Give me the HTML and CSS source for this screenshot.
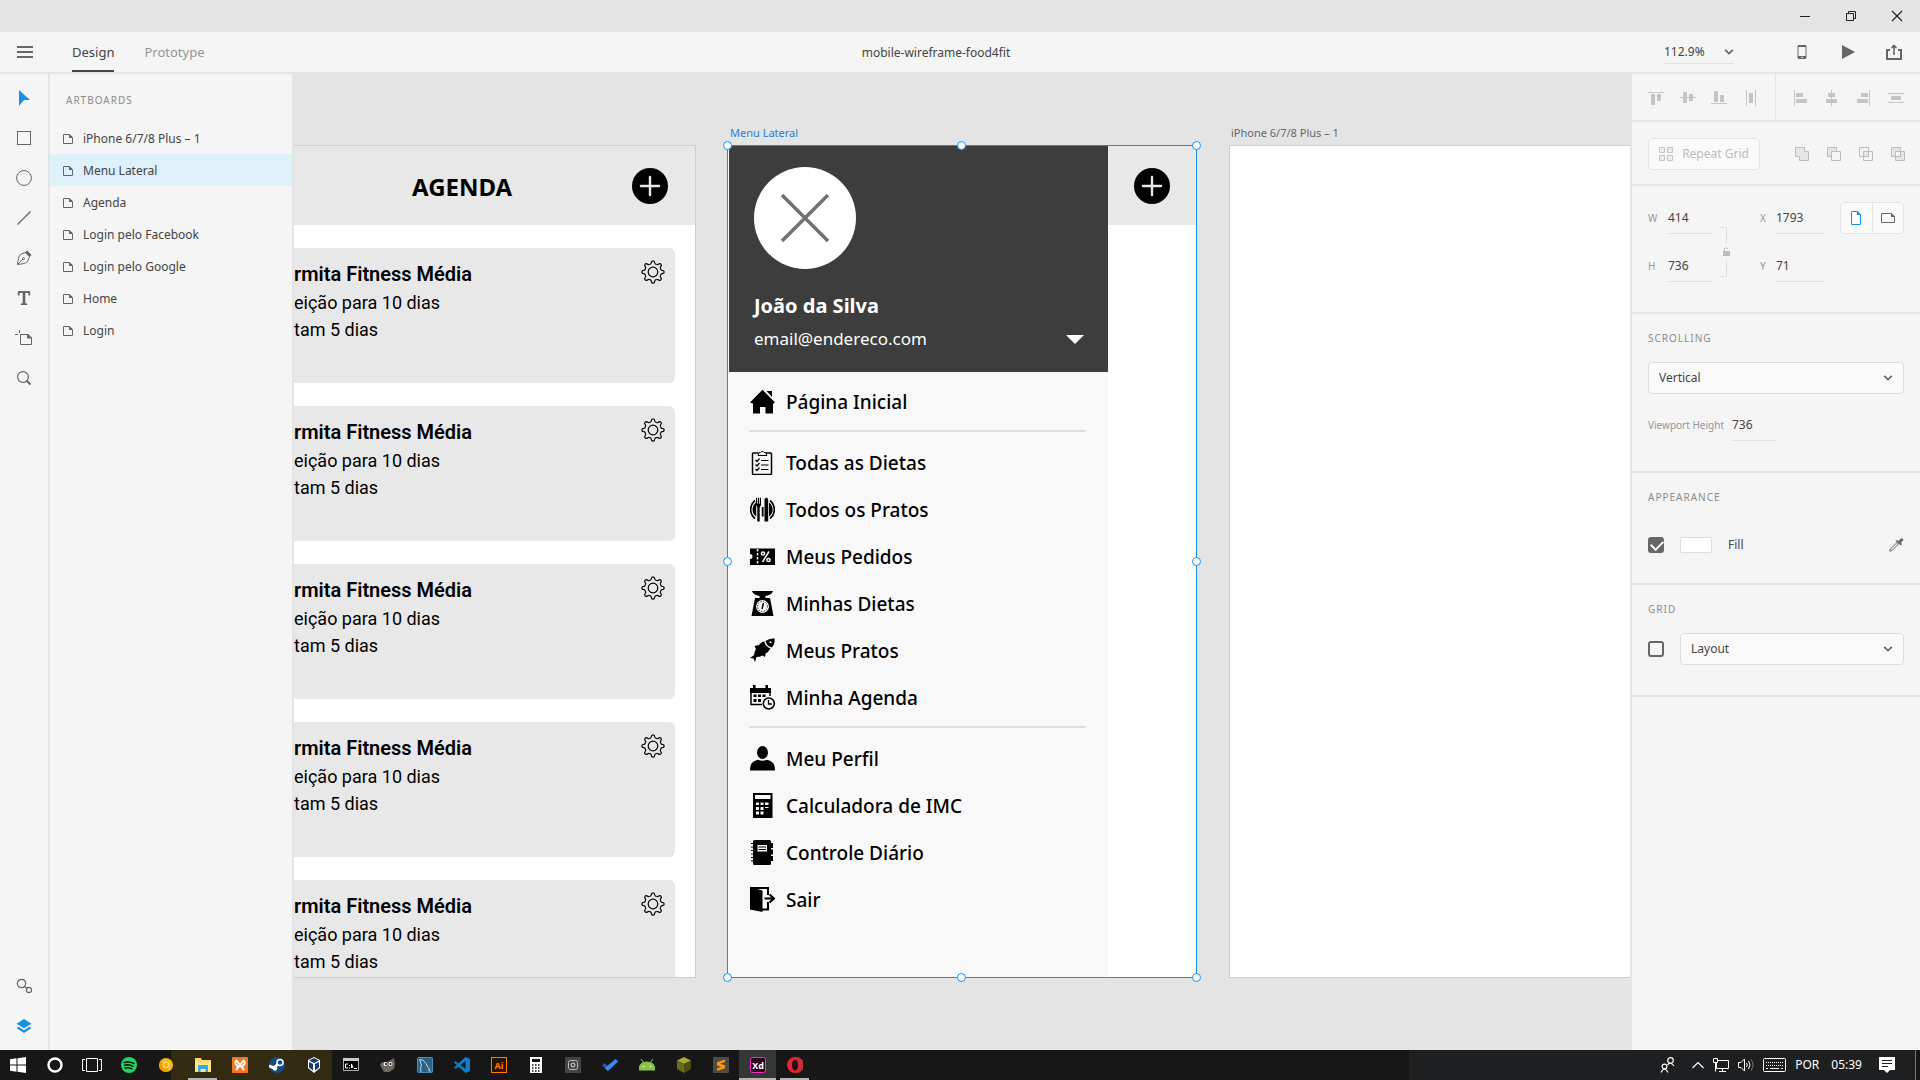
FILE: index.html
```html
<!DOCTYPE html>
<html lang="en">
<head>
<meta charset="utf-8">
<title>mobile-wireframe-food4fit</title>
<link rel="stylesheet" href="styles.css">
</head>
<body>
<svg class="sprite" aria-hidden="true">
  <symbol id="page" viewBox="0 0 10 10"><path d="M1 .5h5.500l3 3v6h-9v-9z" fill="none" stroke="#666"/><path d="M6 0l4 4H6z" fill="#666"/></symbol>
  <symbol id="chevron" viewBox="0 0 10 8"><path d="M1.200 1.800 5 5.500l3.800-3.700" fill="none" stroke="#666" stroke-width="1.700"/></symbol>
  <symbol id="add" viewBox="0 0 36 36"><circle cx="18" cy="18" r="18"/><path d="M18 9v18M9 18h18" stroke="#e8e8e8" stroke-width="2.400" stroke-linecap="round"/></symbol>
  <symbol id="gear" viewBox="0 0 24 24">
    <g fill="none" stroke="#000" stroke-width="1.200">
      <circle cx="12" cy="12" r="4.800"/>
      <path id="t" d="M8.820 4.330Q10.200 4 10.300 2.800 10.400.8 12 .8q1.600 0 1.700 2Q13.800 4 15.180 4.330"/>
      <use href="#t" transform="rotate(45 12 12)"/><use href="#t" transform="rotate(90 12 12)"/><use href="#t" transform="rotate(135 12 12)"/><use href="#t" transform="rotate(180 12 12)"/><use href="#t" transform="rotate(225 12 12)"/><use href="#t" transform="rotate(270 12 12)"/><use href="#t" transform="rotate(315 12 12)"/>
    </g>
  </symbol>
</svg>

<div class="app">
  <header class="titlebar">
    <button class="win" aria-label="Minimize"><svg width="12" height="12"><path d="M1 6.500h10" stroke="#222"/></svg></button>
    <button class="win" aria-label="Restore"><svg width="12" height="12" fill="none" stroke="#222"><path d="M1.500 3.500h7v7h-7zM3.500 3V1.500h7v7H9"/></svg></button>
    <button class="win" aria-label="Close"><svg width="12" height="12"><path d="M1 1l10 10M11 1 1 11" stroke="#222" stroke-width="1.200"/></svg></button>
  </header>

  <div class="topbar">
    <div class="topbar-left">
      <button class="burger" aria-label="Menu"><svg width="16" height="12"><path d="M0 1h16M0 6h16M0 11h16" stroke="#666" stroke-width="2"/></svg></button>
      <nav class="modes"><a class="mode active" href="#design">Design</a><a class="mode" href="#prototype">Prototype</a></nav>
    </div>
    <h1 class="doc-title">mobile-wireframe-food4fit</h1>
    <div class="topbar-right">
      <label class="zoom"><select aria-label="Zoom"><option>112.9%</option></select><svg width="10" height="8"><use href="#chevron"/></svg></label>
      <div class="actions">
        <button aria-label="Device preview"><svg width="16" height="16"><rect x="4" y="1.500" width="8" height="13" rx="1" fill="none" stroke="#666"/><path d="M4 1h8v2H4zM4 12h8v3H4z" fill="#666"/><circle cx="8" cy="13.500" r=".8" fill="#f5f5f5"/></svg></button>
        <button aria-label="Play"><svg width="16" height="16"><path d="M2 1l13 7-13 7z" fill="#666"/></svg></button>
        <button aria-label="Share"><svg width="16" height="16" fill="none" stroke="#666" stroke-width="2"><path d="M4 6H1v9h14V6h-3"/><path d="M8 11V2M5.500 4 8 1.500 10.500 4" stroke-width="1.600"/></svg></button>
      </div>
    </div>
  </div>

  <main class="workspace">
    <div class="tools" role="toolbar" aria-label="Tools">
      <button aria-label="Select"><svg width="16" height="16"><path d="M3 0l11 10H8l-5 6z" fill="#1592e6"/></svg></button>
      <button aria-label="Rectangle"><svg width="16" height="16"><rect x="1.500" y="1.500" width="13" height="13" fill="none" stroke="#666"/></svg></button>
      <button aria-label="Ellipse"><svg width="16" height="16"><circle cx="8" cy="8" r="7.400" fill="none" stroke="#666"/></svg></button>
      <button aria-label="Line"><svg width="16" height="16"><path d="M1.500 14.500l13-13" stroke="#666" stroke-width="1.200"/></svg></button>
      <button aria-label="Pen"><svg width="16" height="16" fill="none" stroke="#666"><path d="M1.500 14.500C2 10 2.500 6.500 4.500 4.500 6 3.500 8 3 9.500 2.500l4 4C13 8 12.500 10 11.500 11.500 9.500 13.500 6 14 1.500 14.500zM2 14l5-5"/><circle cx="7.500" cy="8.500" r="1"/><path d="M10 1.500l4.500 4.500" stroke-width="3"/></svg></button>
      <button aria-label="Text"><svg width="16" height="16" fill="none" stroke="#666"><path d="M2.800 5.500V2h10.400v3.500" stroke-width="1.800"/><path d="M8 2v12" stroke-width="2.600"/><path d="M4.800 14.200h6.400" stroke-width="1.600"/></svg></button>
      <button aria-label="Artboard"><svg width="18" height="16" fill="none" stroke="#666"><path d="M5.500 5v9.500h11V8l-3.500-3.500H5M4.500 0v3M0 4.500h3"/><path d="M12.500 4l4 4h-4z" fill="#666"/></svg></button>
      <button aria-label="Zoom"><svg width="16" height="16" fill="none" stroke="#666"><circle cx="7" cy="7" r="5.400" stroke-width="1.200"/><path d="M10.500 10.500l4 4" stroke-width="2"/></svg></button>
      <span class="grow"></span>
      <button aria-label="Assets"><svg width="16" height="16" fill="none" stroke="#666" stroke-width="1.200"><circle cx="5.500" cy="5.500" r="4.200"/><circle cx="13" cy="12" r="2.600"/><path d="M8.500 8.500l2.500 2"/></svg></button>
      <button aria-label="Layers"><svg width="16" height="16" fill="#1592e6"><path d="M8 1l7.500 4.700L8 10.300.5 5.700zM2.500 8.800 8 12.200l5.500-3.400L15.500 10 8 15 .5 10z"/></svg></button>
    </div>

    <aside class="layers">
      <h2 class="caption">ARTBOARDS</h2>
      <ul>
        <li><svg width="10" height="10"><use href="#page"/></svg>iPhone 6/7/8 Plus – 1</li>
        <li class="selected"><svg width="10" height="10"><use href="#page"/></svg>Menu Lateral</li>
        <li><svg width="10" height="10"><use href="#page"/></svg>Agenda</li>
        <li><svg width="10" height="10"><use href="#page"/></svg>Login pelo Facebook</li>
        <li><svg width="10" height="10"><use href="#page"/></svg>Login pelo Google</li>
        <li><svg width="10" height="10"><use href="#page"/></svg>Home</li>
        <li><svg width="10" height="10"><use href="#page"/></svg>Login</li>
      </ul>
    </aside>

    <div class="canvas">
      <section class="artboard agenda">
        <header class="screen-head"><h2>AGENDA</h2><svg width="36" height="36"><use href="#add"/></svg></header>
        <div class="cards">
          <article class="card"><div><h3>rmita Fitness Média</h3><p>eição para 10 dias</p><p>tam 5 dias</p></div><svg width="24" height="24"><use href="#gear"/></svg></article>
          <article class="card"><div><h3>rmita Fitness Média</h3><p>eição para 10 dias</p><p>tam 5 dias</p></div><svg width="24" height="24"><use href="#gear"/></svg></article>
          <article class="card"><div><h3>rmita Fitness Média</h3><p>eição para 10 dias</p><p>tam 5 dias</p></div><svg width="24" height="24"><use href="#gear"/></svg></article>
          <article class="card"><div><h3>rmita Fitness Média</h3><p>eição para 10 dias</p><p>tam 5 dias</p></div><svg width="24" height="24"><use href="#gear"/></svg></article>
          <article class="card"><div><h3>rmita Fitness Média</h3><p>eição para 10 dias</p><p>tam 5 dias</p></div><svg width="24" height="24"><use href="#gear"/></svg></article>
        </div>
      </section>

      <span class="board-name name-menu">Menu Lateral</span>
      <section class="artboard menu">
        <div class="drawer">
          <header class="profile">
            <svg class="avatar" width="102" height="102"><circle cx="51" cy="51" r="51" fill="#fff"/><path d="M28 28l46 46M74 28 28 74" stroke="#707070" stroke-width="3.400"/></svg>
            <strong>João da Silva</strong>
            <div class="email"><span>email@endereco.com</span><svg width="18" height="9"><path d="M0 0h18l-9 9z" fill="#fff"/></svg></div>
          </header>
          <nav class="menu-list">
            <a href="#inicio"><svg width="25" height="25"><path d="M0 13.500 12.500.8 25 13.500l-2 1.200V24.500h-7.500V18h-5.500v6.500H3v-10zM16.500 2H22v6z"/></svg>Página Inicial</a>
            <hr>
            <a href="#dietas"><svg width="25" height="25" fill="none" stroke="#000"><path d="M8 3H3.500q-1 0-1 1v19.500q0 1 1 1h17q1 0 1-1V4q0-1-1-1H16" stroke-width="1.500"/><path d="M8 5.500h9l-1.500-3H14a2 2 0 0 0-3.500 0H9z"/><path d="M11 10.500h7.500M11 15h7.500M11 19.500h7.500M5.500 10l1.500 1.500 2.500-3M5.500 14.500 7 16l2.500-3M5.500 19 7 20.500l2.500-3" stroke-width="1.200"/></svg>Todas as Dietas</a>
            <a href="#pratos"><svg width="25" height="25"><path d="M5 3.500a11.500 11.500 0 0 0 0 18M20 3.500a11.500 11.500 0 0 1 0 18" fill="none" stroke="#000" stroke-width="1.700"/><path d="M6.200 5.500a8.500 8.500 0 0 0 0 14zM19 5.500a8.500 8.500 0 0 1 0 14zM11.800 10h1.800v9.500h-1.800z"/><path d="M6 .8h1v6h.8v-6h1.400v6h.8v-6h1V8l-1.300 2v14.500H7.300V10L6 8zM14.500 24.500V2q1-1.500 2.200-1.500 1.500 1 1.500 3v21z"/></svg>Todos os Pratos</a>
            <a href="#pedidos"><svg width="25" height="25"><path d="M0 4.500h25v16.500H0v-6a2.500 2.500 0 0 0 0-5z"/><g stroke="#f8f8f8" fill="none" stroke-width="1.500"><path d="M7.500 5v16" stroke-dasharray="2.500 1.500"/><path d="M12.500 18 19 7.500"/><circle cx="13" cy="9.500" r="1.600"/><circle cx="18.500" cy="16" r="1.600"/></g></svg>Meus Pedidos</a>
            <a href="#minhas-dietas"><svg width="25" height="25"><path d="M2 0h21q-1 4-7.500 5v2H20l3.500 18h-22L5 7h4.500V5Q3 4 2 0z"/><circle cx="12.500" cy="15.500" r="6.500" fill="#f8f8f8"/><circle cx="12.500" cy="15.500" r="5" fill="none" stroke="#000" stroke-dasharray="1 1.620"/><path d="M12 18l1.500-6" stroke="#000" stroke-width="1.400"/></svg>Minhas Dietas</a>
            <a href="#meus-pratos"><svg width="25" height="25"><path d="M24.500 .5c.6 4-.5 7-2.700 9Q16.500 8 15.500 3 19.500 0 24.500 .5zM14.300 3.200q.7 5 6.200 7.300-2 3.500-5 5l-.5 3.500-2.500-1.500q-3 1.500-6 1.500l-1.500 5-1.500-3.500L0 20l4.200-3q.3-4 1.800-6L4.500 8 9 7q2.500-3 5.300-3.800z"/><circle cx="20.500" cy="4.200" r="1" fill="#f8f8f8"/></svg>Meus Pratos</a>
            <a href="#minha-agenda"><svg width="25" height="25"><path d="M0 3h21v5H0zM3 0h2.500v4H3zM15.500 0H18v4h-2.500z"/><path d="M1 5v14.500h11M20 7v4" fill="none" stroke="#000" stroke-width="1.500"/><path d="M3.500 9.500h3V12h-3zM8 9.500h3V12H8zM12.500 9.500h3V12h-3zM3.500 14h3v3h-3zM8 14h3v3H8z"/><circle cx="18.800" cy="18.500" r="5.500" fill="#f8f8f8" stroke="#000" stroke-width="1.500"/><path d="M18.500 15v4H22" fill="none" stroke="#000" stroke-width="1.300"/></svg>Minha Agenda</a>
            <hr>
            <a href="#perfil"><svg width="25" height="25"><ellipse cx="12.500" cy="6.500" rx="5.500" ry="6.500"/><path d="M0 24.500C0 17 3 15 8 13.800q4.500 2 9 0C22 15 25 17 25 24.500z"/></svg>Meu Perfil</a>
            <a href="#imc"><svg width="25" height="25"><path d="M3 0h19.500v25H3z"/><g fill="#f8f8f8"><path d="M5 2h15.500v4H5zM6 9.500h3V12H6zM10.500 9.500h3V12h-3zM15 9.500h3.500V12H15zM6 14h3v3H6zM10.500 14h3v3h-3zM15 14h3.500v1H15zM6 18.500h3v3H6zM10.500 18.500h3v3h-3z"/></g></svg>Calculadora de IMC</a>
            <a href="#diario"><svg width="25" height="25"><rect x="3" y="0" width="18" height="25" rx="1.500"/><path d="M22 3v18" stroke="#000" stroke-width="2" stroke-dasharray="5 1.500"/><path d="M1 3.500h4M1 7h4M1 10.500h4M1 14h4M1 17.500h4M1 21h4" stroke="#000" stroke-width="1.200"/><path d="M7.500 5H17v6.500H7.500z" fill="#f8f8f8"/><path d="M8.500 7h7.500M8.500 9.500h7.500" stroke="#000"/></svg>Controle Diário</a>
            <a href="#sair"><svg width="25" height="25"><path d="M0 0l12.500 3.500V25L0 22.500z"/><path d="M0 1h18v7M18 15v7.500h-6" fill="none" stroke="#000" stroke-width="2"/><path d="M14.500 11.500H23M19.500 7.500l4.500 4-4.500 4" fill="none" stroke="#000" stroke-width="2"/></svg>Sair</a>
          </nav>
        </div>
        <div class="behind"><div class="behind-head"><svg width="36" height="36"><use href="#add"/></svg></div></div>
        <div class="selection"><i class="handle tl"></i><i class="handle tc"></i><i class="handle tr"></i><i class="handle ml"></i><i class="handle mr"></i><i class="handle bl"></i><i class="handle bc"></i><i class="handle br"></i></div>
      </section>

      <span class="board-name name-phone">iPhone 6/7/8 Plus – 1</span>
      <section class="artboard phone"></section>
    </div>

    <aside class="inspector">
      <div class="align-row">
        <div class="align-group">
          <button aria-label="Align top"><svg width="16" height="16" fill="#c4c4c4"><path d="M0 2h16v1H0zM3 4h4v11H3zM9 4h4v7H9z"/></svg></button>
          <button aria-label="Align middle"><svg width="16" height="16" fill="#c4c4c4"><path d="M0 7h16v1H0zM3 2h4v11H3zM9 4h4v7H9z"/></svg></button>
          <button aria-label="Align bottom"><svg width="16" height="16" fill="#c4c4c4"><path d="M0 13h16v1H0zM3 1h4v11H3zM9 5h4v7H9z"/></svg></button>
          <button aria-label="Distribute horizontally"><svg width="16" height="16" fill="#c4c4c4"><path d="M3 0h1v16H3zM12 0h1v16h-1zM6 3h4v10H6z"/></svg></button>
        </div>
        <div class="align-group">
          <button aria-label="Align left"><svg width="16" height="16" fill="#c4c4c4"><path d="M2 0h1v16H2zM4 3h7v4H4zM4 9h11v4H4z"/></svg></button>
          <button aria-label="Align center"><svg width="16" height="16" fill="#c4c4c4"><path d="M7 0h1v16H7zM4 3h7v4H4zM2 9h11v4H2z"/></svg></button>
          <button aria-label="Align right"><svg width="16" height="16" fill="#c4c4c4"><path d="M13 0h1v16h-1zM5 3h7v4H5zM1 9h11v4H1z"/></svg></button>
          <button aria-label="Distribute vertically"><svg width="16" height="16" fill="#c4c4c4"><path d="M0 3h16v1H0zM0 12h16v1H0zM3 6h10v4H3z"/></svg></button>
        </div>
      </div>

      <div class="repeat-row">
        <button class="repeat" disabled><svg width="14" height="14" fill="#ececec" stroke="#c4c4c4"><path d="M.5.5h5v5h-5zM8.500.5h5v5h-5zM.5 8.500h5v5h-5zM8.500 8.500h5v5h-5z"/></svg>Repeat Grid</button>
        <div class="booleans">
          <button aria-label="Add"><svg width="16" height="16" fill="#e6e6e6" stroke="#bcbcbc"><path d="M1.500 1.500h9v4h4v9h-9v-4h-4z"/></svg></button>
          <button aria-label="Subtract"><svg width="16" height="16" stroke="#bcbcbc"><path d="M1.500 1.500h9v9h-9z" fill="#e6e6e6"/><path d="M5.500 5.500h9v9h-9z" fill="#f5f5f5"/></svg></button>
          <button aria-label="Intersect"><svg width="16" height="16" fill="none" stroke="#bcbcbc"><path d="M5.500 5.500h5v5h-5z" fill="#e6e6e6"/><path d="M1.500 1.500h9v9h-9zM5.500 5.500h9v9h-9z"/></svg></button>
          <button aria-label="Exclude overlap"><svg width="16" height="16" fill="#e6e6e6" stroke="#bcbcbc"><path d="M1.500 1.500h9v9h-9zM5.500 5.500h9v9h-9z"/><path d="M5.500 5.500h5v5h-5z" fill="#f5f5f5"/></svg></button>
        </div>
      </div>

      <div class="transform">
        <div class="field-col"><label class="field"><span>W</span><input value="414"></label><label class="field"><span>H</span><input value="736"></label></div>
        <svg class="lock" width="12" height="50"><path d="M0 .5h6.500V16M0 49.500h6.500V33" fill="none" stroke="#dcdcdc"/><path d="M3 24h7v5H3z" fill="#bcbcbc"/><path d="M4.500 24v-3h3v1" fill="none" stroke="#bcbcbc"/></svg>
        <div class="field-col xy"><label class="field"><span>X</span><input value="1793"></label><label class="field"><span>Y</span><input value="71"></label></div>
        <div class="orient">
          <button aria-label="Portrait"><svg width="10" height="14"><path d="M.5.5h6l3 3v10h-9z" fill="#fff" stroke="#1592e6"/><path d="M6 0l4 4H6z" fill="#1592e6"/></svg></button>
          <button aria-label="Landscape"><svg width="14" height="10"><path d="M.5.500h10l3 3v6H.5z" fill="#fafafa" stroke="#666"/><path d="M10 0l4 4h-4z" fill="#666"/></svg></button>
        </div>
      </div>

      <section class="block">
        <h2 class="caption">SCROLLING</h2>
        <div class="select"><select aria-label="Scrolling"><option>Vertical</option></select><svg width="10" height="8"><use href="#chevron"/></svg></div>
        <label class="field viewport"><span>Viewport Height</span><input value="736"></label>
      </section>

      <section class="block appearance">
        <h2 class="caption">APPEARANCE</h2>
        <div class="line"><input type="checkbox" id="fill" checked><button class="swatch" aria-label="Fill color"></button><label for="fill">Fill</label><button class="dropper" aria-label="Eyedropper"><svg width="16" height="16"><path d="M9 5.500 2.500 12l-.7 2.200 2.200-.7L10.500 7z" fill="#f5f5f5" stroke="#666"/><path d="M7.500 4 9 3l1.500 1L13 1.500Q15 .8 15.500 3L13 5.500 14 7l-1 1.500z" fill="#666"/></svg></button></div>
      </section>

      <section class="block">
        <h2 class="caption">GRID</h2>
        <div class="line"><input type="checkbox" aria-label="Show grid"><div class="select"><select aria-label="Grid type"><option>Layout</option></select><svg width="10" height="8"><use href="#chevron"/></svg></div></div>
      </section>
    </aside>
  </main>

  <footer class="taskbar">
    <button class="start" aria-label="Start"><svg width="16" height="16" fill="#fff"><path d="M0 2.200 6.500 1.300v6.200H0zM7.500 1.200 16 0v7.500H7.500zM0 8.500h6.500v6.200L0 13.800zM7.500 8.500H16V16l-8.500-1.200z"/></svg></button>
    <button aria-label="Cortana"><svg width="16" height="16"><circle cx="8" cy="8" r="6.500" fill="none" stroke="#fff" stroke-width="2.400"/></svg></button>
    <button aria-label="Task view"><svg width="20" height="16" fill="none" stroke="#fff"><path d="M4.500 1.500h11v13h-11zM3 2.500H.5v11H3M17 2.500h2.500v11H17"/></svg></button>
    <button aria-label="Music"><svg width="16" height="16"><circle cx="8" cy="8" r="8" fill="#1ed760"/><path d="M3 5.500q5-1.500 10 1M3.500 8.300q4.500-1.200 8.500 1M4 11q4-1 7 .8" fill="none" stroke="#111" stroke-width="1.500" stroke-linecap="round"/></svg></button>
    <button class="tint-edge" aria-label="Browser"><svg width="16" height="16"><circle cx="8" cy="8" r="7" fill="#f9b816"/><path d="M1 8a7 7 0 0 0 7 7l3-5-6-4-3-1z" fill="#f29900"/><circle cx="8" cy="8" r="3" fill="#f9b816" stroke="#fde7a8"/></svg></button>
    <button class="tinted open" aria-label="Files"><svg width="16" height="16"><path d="M0 1h6l1 2h9v12H0z" fill="#ffd75e"/><path d="M0 5h16v10H0z" fill="#ffe591"/><path d="M3 15V9q0-1 1-1h8q1 0 1 1v6h-2.500v-3h-5v3z" fill="#36a7e0"/></svg></button>
    <button class="tinted" aria-label="Server"><svg width="16" height="16"><rect width="16" height="16" rx="1" fill="#f37623"/><path d="M4.500 3.500 8 8l3.500 4.500M11.500 3.500 8 8l-3.500 4.500M4.500 3.500Q2 6 4.500 8T4.500 12.500M11.500 3.500Q14 6 11.500 8t0 4.500" fill="none" stroke="#fff" stroke-width="2" stroke-linecap="round"/></svg></button>
    <button class="tinted" aria-label="Games"><svg width="16" height="16"><circle cx="8" cy="8" r="8" fill="#174a80"/><path d="M0 9l5 2 4-4" stroke="#fff" stroke-width="3" fill="none"/><circle cx="11" cy="5.500" r="3" fill="#174a80" stroke="#fff" stroke-width="1.500"/><circle cx="6" cy="11.500" r="2.200" fill="#fff"/></svg></button>
    <button class="tinted" aria-label="Virtual machines"><svg width="16" height="16"><path d="M8 0l6 3v8l-6 5-6-5V3z" fill="#fff"/><path d="M8 1l5 2.500L8 6 3 3.500zM3 5l4 2v6.500L3 10.500zM13 5 9 7v6.500l4-3z" fill="#183c70"/></svg></button>
    <button aria-label="Terminal"><svg width="16" height="14"><path d="M.5.500h15v12H.5z" fill="#000" stroke="#aaa"/><path d="M0 0h16v3H0z" fill="#ccc"/><path d="M5 6H2.500v4H5M6.500 7v1M6.500 9.500v1M8.500 6v4M8.500 6l1.500 4M11 10.500h3" fill="none" stroke="#fff"/></svg></button>
    <button aria-label="Image editor"><svg width="16" height="14"><path d="M2 4 5 5l4-2 5-3 1 6-1 5-5 3H4L0 7z" fill="#6d675d"/><circle cx="5.500" cy="6" r="2" fill="#fff"/><circle cx="10.500" cy="6" r="2" fill="#fff"/><circle cx="6" cy="6" r="1"/><circle cx="10.500" cy="6" r="1"/></svg></button>
    <button aria-label="Database"><svg width="16" height="16"><rect x=".5" y=".5" width="15" height="15" rx="1" fill="#2b6288" stroke="#4b90bb"/><path d="M4 15Q3 10 4.500 8L2.500 2.500q4-.5 6.500 4 1.500 4 4 6l-1.500.5 2 2" fill="none" stroke="#c3d9e6"/></svg></button>
    <button aria-label="Code editor"><svg width="16" height="16"><path d="M11.500 0 16 2v12l-4.500 2L0 5.500 1.500 4 11.500 12V4L1.500 12 0 10.500z" fill="#0b7ed0"/></svg></button>
    <button aria-label="Illustrator"><svg width="16" height="16"><rect x=".5" y=".5" width="15" height="15" fill="#261300" stroke="#ff7c00"/><text x="8" y="12" class="tile-text" fill="#ff7c00">Ai</text></svg></button>
    <button aria-label="Calculator"><svg width="14" height="16"><path d="M1 0h12v16H1z" fill="#fff"/><path d="M3 2h8v3H3z" fill="#111"/><path d="M3 8h9M3 11h9M3 14h9" stroke="#111" stroke-width="1.300" stroke-dasharray="1.500 1.500"/></svg></button>
    <button aria-label="Camera"><svg width="16" height="16"><path d="M0 0h16v16H0z" fill="#444"/><rect x="3.500" y="3.500" width="9" height="9" rx="2" fill="none" stroke="#bbb"/><circle cx="8" cy="8" r="2" fill="none" stroke="#ddd"/></svg></button>
    <button aria-label="Tasks"><svg width="16" height="16"><path d="M0 8.500 2.500 6 7 10l-1 4z" fill="#2a56b4"/><path d="M6 14l-3-3L13.500 2 16 4.500z" fill="#3a8cf2"/></svg></button>
    <button aria-label="Android"><svg width="16" height="12"><path d="M0 11q0-8 8-8t8 8zM2 0l3 4M14 0l-3 4" fill="#8bc34a" stroke="#8bc34a"/><circle cx="4.500" cy="7.500" r=".8" fill="#fff"/><circle cx="11.500" cy="7.500" r=".8" fill="#fff"/></svg></button>
    <button aria-label="Blocks"><svg width="16" height="16"><path d="M8 0l7 3.500L8 7 1 3.500z" fill="#a9ab35"/><path d="M1 3.500 8 7v9l-7-4z" fill="#6b6b1d"/><path d="M15 3.500 8 7v9l7-4z" fill="#4d4d12"/></svg></button>
    <button aria-label="Text editor"><svg width="16" height="16"><rect width="16" height="16" rx="1" fill="#4b4b4b"/><path d="M12 2.500 4 5.200v3.300l8 2.800v-3L7 6.700l5-1.600zM4 14l8-2.800V8.500L4 11.200z" fill="#ff9800"/></svg></button>
    <button class="current open" aria-label="Adobe XD"><svg width="16" height="16"><rect x=".5" y=".5" width="15" height="15" rx="2" fill="#2e001e" stroke="#ff2bc2"/><text x="8" y="12" class="tile-text" fill="#fff">Xd</text></svg></button>
    <button class="open" aria-label="Opera"><svg width="16" height="16"><circle cx="8" cy="8" r="8" fill="#ee2233"/><path d="M9 0a8 8 0 0 1 0 16q5-8 0-16z" fill="#c2303a"/><ellipse cx="8" cy="8" rx="3" ry="5.500" fill="#161616"/></svg></button>
    <div class="tray">
      <svg class="people" width="16" height="16" fill="none" stroke="#fff" stroke-width="1.200"><circle cx="10.500" cy="3.500" r="2.800"/><path d="M7.500 8q3-4 6.500 1"/><circle cx="4.500" cy="9.500" r="2.400"/><path d="M1 15.500q3.500-7 7 0"/></svg>
      <svg width="12" height="8" fill="none" stroke="#fff" stroke-width="1.200"><path d="M.5 7 6 1.500 11.500 7"/></svg>
      <svg width="16" height="14" fill="none" stroke="#fff"><path d="M4 2.500h11.500v8H3.500V5M.5.500h4v4h-4zM2.500 5v8.500M9.500 11v2.500M6 13.500h7"/></svg>
      <svg width="16" height="14" fill="none" stroke="#fff"><path d="M.5 4.500H3L6.500 1v12L3 9.500H.5zM8.500 5q1.500 2 0 4M10.500 3q3 4 0 8"/><path d="M13 1.500q4 5.500 0 11" stroke="#777"/></svg>
      <svg width="23" height="14" fill="none" stroke="#fff"><rect x=".5" y=".5" width="22" height="13" rx="1"/><path d="M3 4.500h17M3 7.500h17" stroke-dasharray="1 1"/><path d="M3 10.500h2M7 10.500h9M18 10.500h2"/></svg>
      <span>POR</span>
      <time>05:39</time>
      <svg width="16" height="16"><path d="M0 0h16v13h-5l-3 3-3-3H0z" fill="#fff"/><path d="M3 3.500h10M3 6.500h10M3 9.500h6" stroke="#1c1c1c"/></svg>
    </div>
  </footer>
</div>
</body>
</html>
```
FILE: styles.css
```css
* { box-sizing: border-box; }
body { margin: 0; font: 12px/16px "Noto Sans", "Open Sans", sans-serif; color: #444; }
h1, h2, h3, p, ul { margin: 0; padding: 0; font-weight: 400; }
ul { list-style: none; }
svg { display: block; flex: none; }
button, input, select { font: inherit; color: inherit; border: 0; background: none; padding: 0; margin: 0; border-radius: 0; }
button { display: flex; align-items: center; justify-content: center; }
a { color: inherit; text-decoration: none; }
select { appearance: none; width: 100%; }
.sprite { position: absolute; width: 0; height: 0; }

.app { display: grid; grid-template-rows: 32px 42px minmax(0, 1fr) 30px; height: 100vh; overflow: hidden; background: #f5f5f5; }

.titlebar { display: flex; justify-content: flex-end; align-items: center; background: #e4e4e4; }
.win { width: 46px; height: 32px; }

.topbar { display: flex; border-bottom: 2px solid #e4e4e4; }
.topbar-left { display: flex; width: 208px; }
.burger { width: 48px; padding-left: 2px; }
.modes { display: flex; gap: 30px; padding-left: 24px; font-size: 13px; line-height: 40px; }
.mode { color: #959595; }
.mode.active { color: #444; border-bottom: 2px solid #444; }
.doc-title { flex: 1; text-align: center; font-size: 12px; line-height: 42px; }
.topbar-right { display: flex; width: 256px; padding-right: 18px; justify-content: space-between; align-items: center; }
.zoom { display: flex; align-items: center; width: 70px; height: 24px; border-bottom: 1px solid #e0e0e0; }
.actions { display: flex; gap: 30px; }

.workspace { display: flex; min-height: 0; }
.tools { display: flex; flex-direction: column; width: 50px; padding: 4px 0; border-right: 2px solid #e4e4e4; }
.tools button { height: 40px; }
.grow { flex: 1; }

.layers { width: 244px; border-right: 2px solid #e4e4e4; }
.caption { font-size: 10px; line-height: 16px; letter-spacing: 1px; color: #8c8c8c; }
.layers .caption { padding: 18px 16px 14px; }
.layers li { display: flex; align-items: center; gap: 10px; height: 32px; padding: 2px 0 0 13px; }
.layers .selected { background: #def0fa; }

.canvas { position: relative; flex: 1; min-width: 0; overflow: hidden; background: #e4e4e4; }
.artboard { position: absolute; top: 71px; height: 833px; background: #fff; border: 1px solid #cfcfcf; }
.agenda { left: 0; width: 402px; border-left: 0; overflow: hidden; color: #000; }
.menu { left: 433px; width: 470px; border: 0; display: flex; padding: 1px; }
.phone { left: 935px; width: 470px; }
.board-name { position: absolute; top: 51px; font-size: 11px; color: #666; }
.name-menu { left: 436px; color: #1e80d8; }
.name-phone { left: 937px; }

.screen-head { display: flex; align-items: center; justify-content: space-between; height: 79px; padding: 0 27px 0 118px; background: #e8e8e8; }
.screen-head h2 { font-size: 24px; line-height: 32px; font-weight: 700; padding-top: 2px; }
.cards { display: grid; gap: 23px; padding: 23px 20px 0 0; }
.card { display: flex; justify-content: space-between; height: 135px; padding: 12px 10px 12px 0; background: #e8e8e8; border-radius: 0 6px 6px 0; font: 18px/27px Roboto, sans-serif; }
.card h3 { font-size: 20px; line-height: 29px; font-weight: 600; }

.drawer { width: 380px; padding-left: 1px; background: #f8f8f8; color: #000; }
.profile { height: 226px; padding: 21px 24px 0 25px; background: #3d3d3d; color: #fff; font-size: 17px; line-height: 24px; }
.profile strong { display: block; margin: 25px 0 9px; font-size: 20px; }
.email { display: flex; align-items: center; justify-content: space-between; }
.menu-list { padding: 6px 22px 0 20px; font-size: 19px; font-weight: 500; }
.menu-list a { display: flex; align-items: center; gap: 11px; height: 47px; padding-left: 1px; }
.menu-list hr { height: 2px; margin: 5px 0 7px; border: 0; background: #dedede; }
.behind { flex: 1; }
.behind-head { display: flex; align-items: center; justify-content: center; height: 79px; background: #e8e8e8; }
.selection { position: absolute; inset: 0; border: 1px solid #1592e6; }
.handle { position: absolute; width: 9px; height: 9px; margin: -5px; border: 1px solid #1592e6; border-radius: 50%; background: #fff; }
.tl, .tc, .tr { top: 0; }
.bl, .bc, .br { bottom: 0; }
.ml, .mr { top: 50%; }
.tl, .ml, .bl { left: 0; }
.tr, .mr, .br { right: 0; }
.tc, .bc { left: 50%; }

.inspector { width: 290px; border-left: 2px solid #e4e4e4; }
.align-row { display: flex; height: 48px; border-bottom: 2px solid #e4e4e4; }
.align-group { display: flex; gap: 8px; padding: 0 12px; }
.align-group:first-child { width: 144px; border-right: 1px solid #e4e4e4; }
.align-group button { width: 24px; padding-top: 2px; }
.repeat-row { display: flex; align-items: center; justify-content: space-between; height: 64px; padding: 2px 14px 0 16px; border-bottom: 2px solid #e4e4e4; }
.repeat { gap: 9px; width: 112px; height: 32px; border: 1px solid #e4e4e4; border-radius: 4px; background: #fafafa; color: #bbb; }
.booleans { display: flex; gap: 16px; }
.transform { display: flex; align-items: flex-start; height: 128px; padding: 16px 16px 0; border-bottom: 2px solid #e4e4e4; }
.field { display: flex; align-items: center; gap: 8px; }
.field span { font-size: 10px; color: #959595; }
.field input { flex: 1; width: 0; min-width: 0; height: 32px; border-bottom: 1px solid #e0e0e0; }
.field-col { display: flex; flex-direction: column; gap: 16px; width: 64px; }
.field-col span { width: 12px; }
.field-col.xy { margin-left: 28px; }
.field-col.xy span { width: 8px; }
.lock { margin: 25px 0 0 8px; }
.orient { display: flex; width: 64px; height: 32px; margin-left: 16px; border: 1px solid #e4e4e4; border-radius: 4px; background: #fafafa; }
.orient button { flex: 1; }
.orient button + button { border-left: 1px solid #e4e4e4; }

.block { padding: 16px 16px 30px; border-bottom: 2px solid #e4e4e4; }
.block .caption { margin-bottom: 16px; }
.select { display: flex; align-items: center; flex: 1; height: 32px; padding: 0 10px; border: 1px solid #dcdcdc; border-radius: 4px; background: #fafafa; }
.viewport { width: 128px; margin-top: 15px; }
.viewport span { flex: none; }
.line { display: flex; align-items: center; gap: 16px; height: 32px; }
.appearance { padding-bottom: 14px; }
.appearance .line { height: 48px; }
input[type="checkbox"] { appearance: none; flex: none; width: 16px; height: 16px; border: 2px solid #666; border-radius: 3px; }
input[type="checkbox"]:checked { background: #666; }
input[type="checkbox"]:checked::before { content: ""; display: block; width: 10px; height: 6px; margin: 1px; border: solid #fff; border-width: 0 0 2px 2px; transform: rotate(-45deg); }
.swatch { width: 32px; height: 16px; border: 1px solid #dcdcdc; border-radius: 2px; background: #fff; }
.dropper { margin-left: auto; }

.taskbar { display: flex; background: #171717; color: #fff; }
.taskbar button { position: relative; flex: none; width: 37px; }
.taskbar .start { width: 36px; }
.taskbar .tinted { background: #332a12; }
.taskbar .tint-edge { background: linear-gradient(90deg, #171717 66%, #332a12 66%); }
.taskbar .current { background: #343737; }
.taskbar .open::after { content: ""; position: absolute; left: 4px; right: 4px; bottom: 0; height: 2px; background: #b5b5b5; }
.taskbar .current::after { left: 0; right: 0; }
.tile-text { font: 700 9px "Noto Sans", sans-serif; text-anchor: middle; }
.tray { display: flex; align-items: center; justify-content: flex-end; gap: 9px; width: 507px; margin-left: auto; margin-right: 4px; padding-right: 20px; border-right: 1px solid #777; background: #1e1f21; }
.people { margin-right: 7px; }
.tray time { margin: 0 8px 0 3px; }
```
